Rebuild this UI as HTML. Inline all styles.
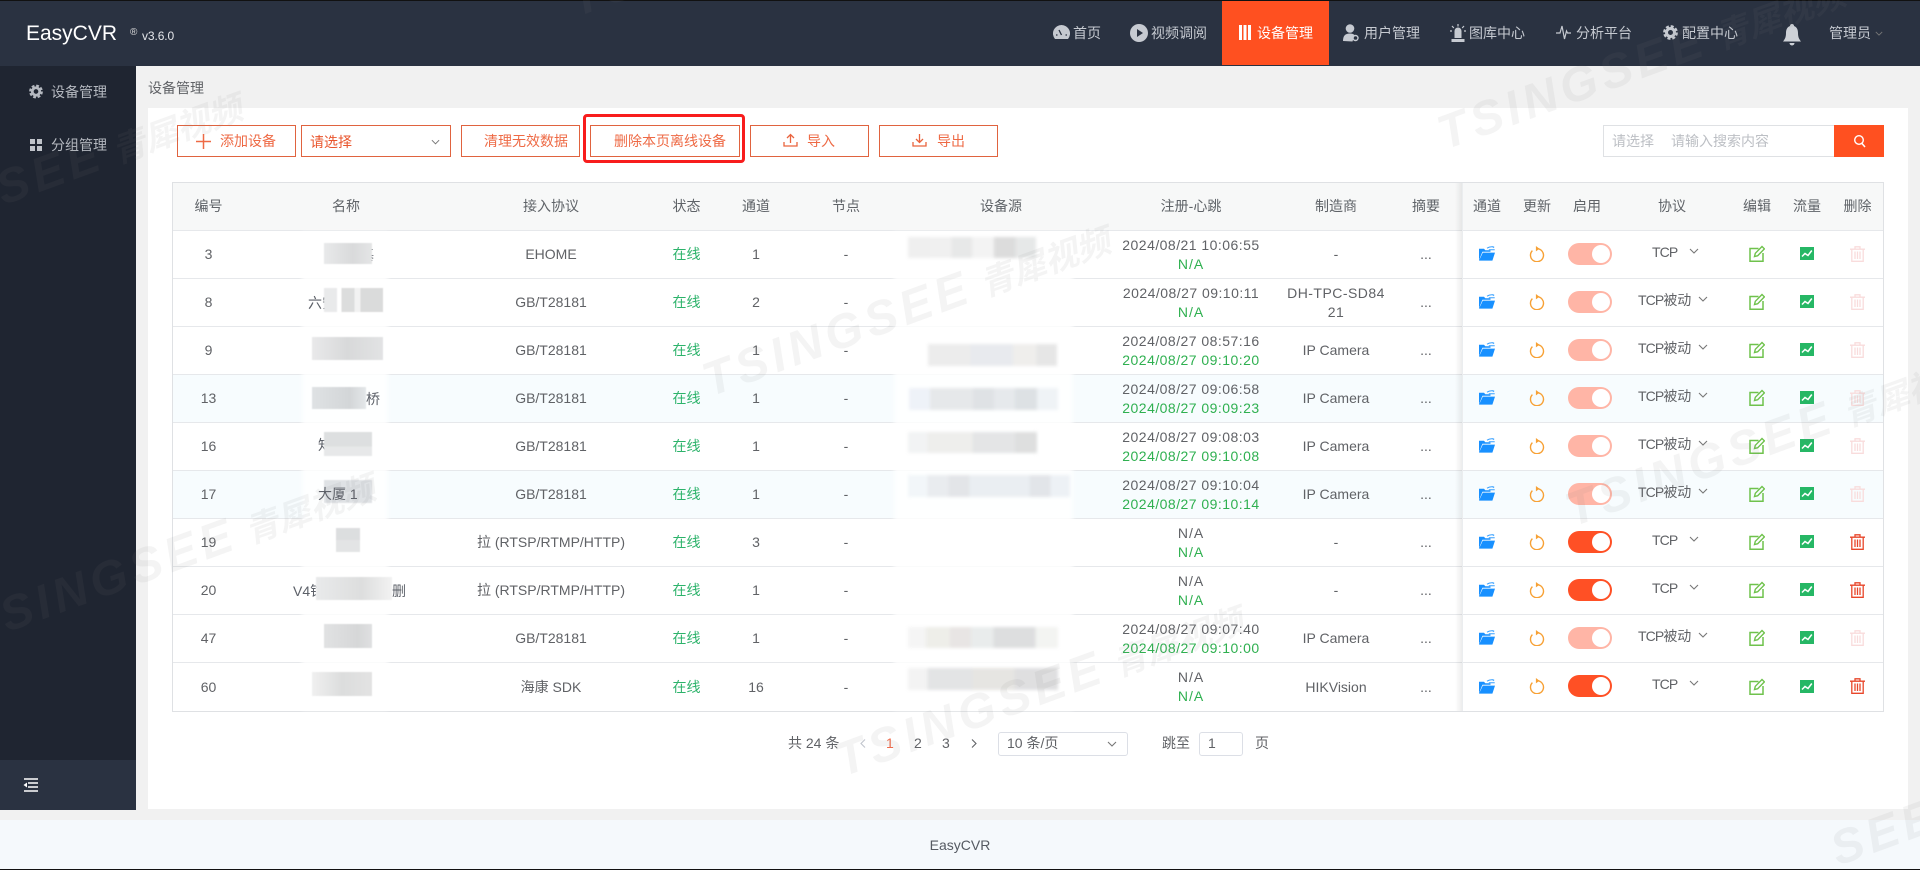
<!DOCTYPE html>
<html lang="zh">
<head>
<meta charset="utf-8">
<title>EasyCVR</title>
<style>
*{box-sizing:border-box;margin:0;padding:0}
html,body{width:1920px;height:870px;overflow:hidden;background:#f1f1f1}
body{position:relative;font:14px/20px "Liberation Sans","Noto Sans CJK SC",sans-serif;color:#606266}
.a{position:absolute;white-space:nowrap}
#top{left:0;top:0;width:1920px;height:1px;background:#111}
#hd{left:0;top:1px;width:1920px;height:65px;background:#2a3241}
#side{left:0;top:66px;width:136px;height:694px;background:#1f2531}
#col{left:0;top:760px;width:136px;height:50px;background:#2a3241}
#card{left:148px;top:108px;width:1760px;height:701px;background:#fff}
#ft{left:0;top:820px;width:1920px;height:49px;background:#f5f9fc;text-align:center;line-height:50px;color:#555a62}
#bot{left:0;top:869px;width:1920px;height:1px;background:#111}
.nav{top:23px;color:#c6cad1;line-height:20px}
.ni{top:24px}
.side{color:#b5b9c0;left:51px}
.btn{top:125px;height:32px;border:1px solid #e0633f;background:#fff}
.or{color:#ee6a45;line-height:20px;top:131px}
#tb{left:172px;top:182px;width:1712px;height:530px;border:1px solid #dfe1e4;background:#fff}
.r{display:grid;grid-template-columns:71px 204px 206px 65px 74px 106px 204px 176px 114px 66px 3px 50px 50px 50px 120px 50px 50px 51px;height:48px;border-bottom:1px solid #e6e8eb;align-items:center;text-align:center;line-height:19px}
.r:last-child{border-bottom:0}
.r>span{display:block;position:relative}
.h{background:#f7f8f8;color:#5f6368}
.hv{background:#f7fcfe}
.on{color:#2db36b}
.d{letter-spacing:.47px}
.g2{color:#2fb050}
.na{letter-spacing:1px}
svg{display:block}
.c svg{margin:0 auto;position:relative;top:-1px}
.sw{display:block;width:44px;height:22px;border-radius:11px;margin:0 auto;background:#ff5025;position:relative;top:-1px;left:3px}
.sw:after{content:"";position:absolute;left:24px;top:2px;width:18px;height:18px;border-radius:50%;background:#fff}
.off{background:#ffb5a6}
.p{height:20px}
.p b{position:absolute;font-weight:400;top:-2px;letter-spacing:-.9px}
.p b u{text-decoration:none;letter-spacing:0}
.p svg{position:absolute;top:0}
#shade{left:1455px;top:183px;width:7px;height:528px;background:linear-gradient(90deg,rgba(0,0,0,0),rgba(0,0,0,.07))}
#fixed{left:1462px;top:183px;width:1px;height:528px;background:#ebedef}
.haze{background:rgba(255,255,255,.8);filter:blur(2px)}
.bl{filter:blur(1.6px)}
.n{color:#5c6068;line-height:20px}
.gp{filter:blur(.6px);background:#d8dadb}
.pg{top:733px;line-height:20px;color:#606266}
.box{border:1px solid #dcdfe6;border-radius:3px;background:#fff}
#wm{left:0;top:0;width:1920px;height:870px;pointer-events:none}
</style>
</head>
<body>
<svg width="0" height="0" style="position:absolute">
<defs>
<symbol id="folder" viewBox="0 0 16 15"><path d="M0 14.500V2.800h5l1.300 1.500h5.200v1.400H3.400L.9 12" fill="#1890ff"/><path d="M3.800 6.600H16l-2.600 8H0z" fill="#1890ff"/><path d="M8 2.200C10 .9 12 .6 14.200.9M9.800 3.800H15.700" fill="none" stroke="#38a0ff" stroke-width="1"/><path d="M13.600 0l2 1-1.600 1.200z" fill="#38a0ff"/></symbol>
<symbol id="ref" viewBox="0 0 16 16"><path d="M8 2.700A6.500 6.500 0 1 1 3.400 4.600" fill="none" stroke="#f7a135" stroke-width="1.400"/><path d="M6.900 0L10.500 2.700 6.900 5.400z" fill="#f7a135"/></symbol>
<symbol id="edit" viewBox="0 0 16 17"><path d="M9.500 3.500H1v12.700h13V8" fill="none" stroke="#6fc24c" stroke-width="1.500"/><path d="M5.500 11.500L6.300 8.300 13 1.500l2.400 2.400-6.700 6.800z" fill="none" stroke="#6fc24c" stroke-width="1.400"/></symbol>
<symbol id="chart" viewBox="0 0 14 13"><rect width="14" height="13" fill="#26b765"/><path d="M2 9.500L5 6.500 8 8.500 11.800 3.500" fill="none" stroke="#fff" stroke-width="1.500"/></symbol>
<symbol id="del" viewBox="0 0 15 16"><path d="M0 3.200H15M5 3V.8H10V3" fill="none" stroke="#e8462a" stroke-width="1.300"/><path d="M1.800 3.500V15.300H13.200V3.500M5 5.500V13M7.500 5.500V13M10 5.500V13" fill="none" stroke="#e8462a" stroke-width="1.300"/></symbol>
<symbol id="delo" viewBox="0 0 15 16"><path d="M0 3.200H15M5 3V.8H10V3" fill="none" stroke="#f9dcdc" stroke-width="1.300"/><path d="M1.800 3.500V15.300H13.200V3.500M5 5.500V13M7.500 5.500V13M10 5.500V13" fill="none" stroke="#f9dcdc" stroke-width="1.300"/></symbol>
<symbol id="chev" viewBox="0 0 10 6"><path d="M1 1l4 4 4-4" fill="none" stroke="#777" stroke-width="1.100"/></symbol>
</defs>
</svg>

<div class="a" id="top"></div>
<div class="a" id="hd"></div>
<div class="a" id="side"></div>
<div class="a" id="col"></div>
<div class="a" id="card"></div>
<div class="a" id="ft">EasyCVR</div>
<div class="a" id="bot"></div>

<div class="a" style="left:26px;top:21px;font-size:21px;line-height:26px;color:#fff">EasyCVR</div>
<div class="a" style="left:130px;top:27px;font-size:10px;line-height:12px;color:#ddd">®</div>
<div class="a" style="left:142px;top:28px;font-size:12px;line-height:16px;letter-spacing:-.1px;color:#e4e6ea">v3.6.0</div>

<div class="a" style="left:1222px;top:1px;width:107px;height:64px;background:#ff5020"></div>

<svg class="a ni" style="left:1053px;top:25px" width="17" height="15" viewBox="0 0 17 15"><path d="M8.500 0A8.500 8.500 0 0 0 2 14h13A8.500 8.500 0 0 0 8.500 0z" fill="#c6cad1"/><path d="M8.500 10L6 5M3 10h1.500M12.500 10H14" stroke="#2a3241" stroke-width="1.300"/></svg>
<div class="a nav" style="left:1073px">首页</div>
<svg class="a ni" style="left:1130px;top:24px" width="18" height="18" viewBox="0 0 18 18"><circle cx="9" cy="9" r="9" fill="#c6cad1"/><path d="M7 5l6 4-6 4z" fill="#2a3241"/></svg>
<div class="a nav" style="left:1151px">视频调阅</div>
<svg class="a ni" style="left:1239px;top:25px" width="12" height="15" viewBox="0 0 12 15"><path d="M0 0h3v15H0zM4.500 0h3v15h-3zM9 0h3v15H9z" fill="#fff"/></svg>
<div class="a nav" style="left:1257px;color:#fff">设备管理</div>
<svg class="a ni" style="left:1343px;top:24px" width="16" height="18" viewBox="0 0 16 18"><circle cx="7" cy="4.500" r="4.300" fill="#c6cad1"/><path d="M0 17c0-5 2-7.500 7-7.500 2 0 3.500.5 4.500 1.500l-2 6.500z" fill="#c6cad1"/><circle cx="12.500" cy="14" r="2.500" fill="none" stroke="#c6cad1" stroke-width="1.400"/></svg>
<div class="a nav" style="left:1364px">用户管理</div>
<svg class="a ni" style="left:1450px;top:24px" width="16" height="18" viewBox="0 0 16 18"><path d="M4.500 7a3.500 3.500 0 0 1 7 0v7h-7zM1.500 15h13v3h-13z" fill="#c6cad1"/><path d="M8 0v2.500M2 2l1.800 2M14 2l-1.800 2M0 7h2M14 7h2" stroke="#c6cad1" stroke-width="1.200"/></svg>
<div class="a nav" style="left:1469px">图库中心</div>
<svg class="a ni" style="left:1556px;top:25px" width="15" height="15" viewBox="0 0 15 15"><path d="M0 8h4l2-7 2.500 13L10.500 6 11.500 8H15" fill="none" stroke="#c6cad1" stroke-width="1.200"/></svg>
<div class="a nav" style="left:1576px">分析平台</div>
<svg class="a ni" style="left:1663px;top:25px" width="15" height="15" viewBox="0 0 15 15"><circle cx="7.500" cy="7.500" r="4" fill="none" stroke="#c6cad1" stroke-width="3"/><circle cx="7.500" cy="7.500" r="6.200" fill="none" stroke="#c6cad1" stroke-width="2.400" stroke-dasharray="3 1.870"/></svg>
<div class="a nav" style="left:1682px">配置中心</div>
<svg class="a" style="left:1782px;top:24px" width="20" height="22" viewBox="0 0 20 22"><path d="M10 0c1.200 0 2 .8 2 2 3 1 4 4 4 7 0 4 1 6 3 8.500H1C3 15 4 13 4 9c0-3 1-6 4-7 0-1.200.8-2 2-2z" fill="#cdd1d7"/><path d="M7.500 19a2.500 2.500 0 0 0 5 0z" fill="#cdd1d7"/></svg>
<div class="a nav" style="left:1829px">管理员</div>
<svg class="a" style="left:1875px;top:31px" width="8" height="5"><use href="#chev"/></svg>

<svg class="a" style="left:29px;top:84px" width="14" height="15" viewBox="0 0 15 15"><circle cx="7.500" cy="7.500" r="4" fill="none" stroke="#b5b9c0" stroke-width="3"/><circle cx="7.500" cy="7.500" r="6.200" fill="none" stroke="#b5b9c0" stroke-width="2.400" stroke-dasharray="3 1.870"/></svg>
<div class="a side" style="top:82px">设备管理</div>
<svg class="a" style="left:30px;top:139px" width="12" height="12" viewBox="0 0 12 12"><path d="M0 0h5v5H0zM7 0h5v5H7zM0 7h5v5H0zM7 7h5v5H7z" fill="#c0c4ca"/></svg>
<div class="a side" style="top:135px">分组管理</div>
<svg class="a" style="left:23px;top:778px" width="15" height="14" viewBox="0 0 15 14"><path d="M1 1h14M5 5h10M5 9h10M1 13h14" stroke="#fff" stroke-width="1.600"/><path d="M.5 7L4 4.500v5z" fill="#fff"/></svg>

<div class="a" style="left:148px;top:78px;color:#606266">设备管理</div>

<div class="a btn" style="left:177px;width:119px"></div>
<svg class="a" style="left:196px;top:134px" width="15" height="15" viewBox="0 0 15 15"><path d="M7.500 0v15M0 7.500h15" stroke="#ee6a45" stroke-width="1.500"/></svg>
<div class="a or" style="left:220px">添加设备</div>
<div class="a btn" style="left:301px;width:150px"></div>
<div class="a or" style="left:310px;top:132px;color:#e9552d">请选择</div>
<svg class="a" style="left:431px;top:139px" width="9" height="6"><use href="#chev"/></svg>
<div class="a btn" style="left:461px;width:119px"></div>
<div class="a or" style="left:484px">清理无效数据</div>
<div class="a" style="left:583px;top:114px;width:162px;height:49px;border:3.500px solid #f81d1d;border-radius:4px"></div>
<div class="a btn" style="left:590px;width:150px"></div>
<div class="a or" style="left:614px">删除本页离线设备</div>
<div class="a btn" style="left:750px;width:119px"></div>
<svg class="a" style="left:783px;top:133px" width="15" height="14" viewBox="0 0 15 14"><path d="M1 9v4h13V9M7.500 10V1.500M4 5l3.500-3.500L11 5" fill="none" stroke="#e9633d" stroke-width="1.300"/></svg>
<div class="a or" style="left:807px">导入</div>
<div class="a btn" style="left:879px;width:119px"></div>
<svg class="a" style="left:912px;top:133px" width="15" height="14" viewBox="0 0 15 14"><path d="M1 9v4h13V9M7.500 1v8.500M4 6l3.500 3.500L11 6" fill="none" stroke="#e9633d" stroke-width="1.300"/></svg>
<div class="a or" style="left:937px">导出</div>

<div class="a" style="left:1603px;top:125px;width:232px;height:32px;border:1px solid #dfe1e4;border-right:0;background:#fff"></div>
<div class="a" style="left:1612px;top:131px;color:#bcbfc4">请选择</div>
<div class="a" style="left:1671px;top:131px;color:#bcbfc4">请输入搜索内容</div>
<div class="a" style="left:1834px;top:125px;width:50px;height:32px;background:#ff5020"></div>
<svg class="a" style="left:1853px;top:134px" width="13" height="14" viewBox="0 0 13 14"><circle cx="6" cy="6" r="4.300" fill="none" stroke="#fff" stroke-width="1.400"/><path d="M9 9.500l3 3.500" stroke="#fff" stroke-width="1.500"/></svg>

<div class="a" id="tb">
<div class="r h"><span>编号</span><span>名称</span><span>接入协议</span><span>状态</span><span>通道</span><span>节点</span><span>设备源</span><span>注册-心跳</span><span>制造商</span><span>摘要</span><span></span><span>通道</span><span>更新</span><span>启用</span><span>协议</span><span>编辑</span><span>流量</span><span>删除</span></div>

<div class="r"><span>3</span><span></span><span>EHOME</span><span class="on">在线</span><span>1</span><span>-</span><span></span><span><span class="d">2024/08/21 10:06:55</span><br><span class="g2 na">N/A</span></span><span>-</span><span>...</span><span></span><span class="c"><svg width="16" height="15"><use href="#folder"/></svg></span><span class="c"><svg width="16" height="16"><use href="#ref"/></svg></span><span><i class="sw off"></i></span><span class="p"><b style="left:40px">TCP</b><svg style="left:77px;top:3px" width="10" height="6"><use href="#chev"/></svg></span><span class="c"><svg width="16" height="17"><use href="#edit"/></svg></span><span class="c"><svg width="14" height="13"><use href="#chart"/></svg></span><span class="c"><svg width="15" height="16"><use href="#delo"/></svg></span></div>

<div class="r"><span>8</span><span></span><span>GB/T28181</span><span class="on">在线</span><span>2</span><span>-</span><span></span><span><span class="d">2024/08/27 09:10:11</span><br><span class="g2 na">N/A</span></span><span class="d">DH-TPC-SD84<br>21</span><span>...</span><span></span><span class="c"><svg width="16" height="15"><use href="#folder"/></svg></span><span class="c"><svg width="16" height="16"><use href="#ref"/></svg></span><span><i class="sw off"></i></span><span class="p"><b style="left:26px">TCP<u>被动</u></b><svg style="left:86px;top:3px" width="10" height="6"><use href="#chev"/></svg></span><span class="c"><svg width="16" height="17"><use href="#edit"/></svg></span><span class="c"><svg width="14" height="13"><use href="#chart"/></svg></span><span class="c"><svg width="15" height="16"><use href="#delo"/></svg></span></div>

<div class="r"><span>9</span><span></span><span>GB/T28181</span><span class="on">在线</span><span>1</span><span>-</span><span></span><span><span class="d">2024/08/27 08:57:16</span><br><span class="g2 d">2024/08/27 09:10:20</span></span><span>IP Camera</span><span>...</span><span></span><span class="c"><svg width="16" height="15"><use href="#folder"/></svg></span><span class="c"><svg width="16" height="16"><use href="#ref"/></svg></span><span><i class="sw off"></i></span><span class="p"><b style="left:26px">TCP<u>被动</u></b><svg style="left:86px;top:3px" width="10" height="6"><use href="#chev"/></svg></span><span class="c"><svg width="16" height="17"><use href="#edit"/></svg></span><span class="c"><svg width="14" height="13"><use href="#chart"/></svg></span><span class="c"><svg width="15" height="16"><use href="#delo"/></svg></span></div>

<div class="r hv"><span>13</span><span></span><span>GB/T28181</span><span class="on">在线</span><span>1</span><span>-</span><span></span><span><span class="d">2024/08/27 09:06:58</span><br><span class="g2 d">2024/08/27 09:09:23</span></span><span>IP Camera</span><span>...</span><span></span><span class="c"><svg width="16" height="15"><use href="#folder"/></svg></span><span class="c"><svg width="16" height="16"><use href="#ref"/></svg></span><span><i class="sw off"></i></span><span class="p"><b style="left:26px">TCP<u>被动</u></b><svg style="left:86px;top:3px" width="10" height="6"><use href="#chev"/></svg></span><span class="c"><svg width="16" height="17"><use href="#edit"/></svg></span><span class="c"><svg width="14" height="13"><use href="#chart"/></svg></span><span class="c"><svg width="15" height="16"><use href="#delo"/></svg></span></div>

<div class="r"><span>16</span><span></span><span>GB/T28181</span><span class="on">在线</span><span>1</span><span>-</span><span></span><span><span class="d">2024/08/27 09:08:03</span><br><span class="g2 d">2024/08/27 09:10:08</span></span><span>IP Camera</span><span>...</span><span></span><span class="c"><svg width="16" height="15"><use href="#folder"/></svg></span><span class="c"><svg width="16" height="16"><use href="#ref"/></svg></span><span><i class="sw off"></i></span><span class="p"><b style="left:26px">TCP<u>被动</u></b><svg style="left:86px;top:3px" width="10" height="6"><use href="#chev"/></svg></span><span class="c"><svg width="16" height="17"><use href="#edit"/></svg></span><span class="c"><svg width="14" height="13"><use href="#chart"/></svg></span><span class="c"><svg width="15" height="16"><use href="#delo"/></svg></span></div>

<div class="r hv"><span>17</span><span></span><span>GB/T28181</span><span class="on">在线</span><span>1</span><span>-</span><span></span><span><span class="d">2024/08/27 09:10:04</span><br><span class="g2 d">2024/08/27 09:10:14</span></span><span>IP Camera</span><span>...</span><span></span><span class="c"><svg width="16" height="15"><use href="#folder"/></svg></span><span class="c"><svg width="16" height="16"><use href="#ref"/></svg></span><span><i class="sw off"></i></span><span class="p"><b style="left:26px">TCP<u>被动</u></b><svg style="left:86px;top:3px" width="10" height="6"><use href="#chev"/></svg></span><span class="c"><svg width="16" height="17"><use href="#edit"/></svg></span><span class="c"><svg width="14" height="13"><use href="#chart"/></svg></span><span class="c"><svg width="15" height="16"><use href="#delo"/></svg></span></div>

<div class="r"><span>19</span><span></span><span>拉 (RTSP/RTMP/HTTP)</span><span class="on">在线</span><span>3</span><span>-</span><span></span><span><span class="na">N/A</span><br><span class="g2 na">N/A</span></span><span>-</span><span>...</span><span></span><span class="c"><svg width="16" height="15"><use href="#folder"/></svg></span><span class="c"><svg width="16" height="16"><use href="#ref"/></svg></span><span><i class="sw"></i></span><span class="p"><b style="left:40px">TCP</b><svg style="left:77px;top:3px" width="10" height="6"><use href="#chev"/></svg></span><span class="c"><svg width="16" height="17"><use href="#edit"/></svg></span><span class="c"><svg width="14" height="13"><use href="#chart"/></svg></span><span class="c"><svg width="15" height="16"><use href="#del"/></svg></span></div>

<div class="r"><span>20</span><span></span><span>拉 (RTSP/RTMP/HTTP)</span><span class="on">在线</span><span>1</span><span>-</span><span></span><span><span class="na">N/A</span><br><span class="g2 na">N/A</span></span><span>-</span><span>...</span><span></span><span class="c"><svg width="16" height="15"><use href="#folder"/></svg></span><span class="c"><svg width="16" height="16"><use href="#ref"/></svg></span><span><i class="sw"></i></span><span class="p"><b style="left:40px">TCP</b><svg style="left:77px;top:3px" width="10" height="6"><use href="#chev"/></svg></span><span class="c"><svg width="16" height="17"><use href="#edit"/></svg></span><span class="c"><svg width="14" height="13"><use href="#chart"/></svg></span><span class="c"><svg width="15" height="16"><use href="#del"/></svg></span></div>

<div class="r"><span>47</span><span></span><span>GB/T28181</span><span class="on">在线</span><span>1</span><span>-</span><span></span><span><span class="d">2024/08/27 09:07:40</span><br><span class="g2 d">2024/08/27 09:10:00</span></span><span>IP Camera</span><span>...</span><span></span><span class="c"><svg width="16" height="15"><use href="#folder"/></svg></span><span class="c"><svg width="16" height="16"><use href="#ref"/></svg></span><span><i class="sw off"></i></span><span class="p"><b style="left:26px">TCP<u>被动</u></b><svg style="left:86px;top:3px" width="10" height="6"><use href="#chev"/></svg></span><span class="c"><svg width="16" height="17"><use href="#edit"/></svg></span><span class="c"><svg width="14" height="13"><use href="#chart"/></svg></span><span class="c"><svg width="15" height="16"><use href="#delo"/></svg></span></div>

<div class="r"><span>60</span><span></span><span>海康 SDK</span><span class="on">在线</span><span>16</span><span>-</span><span></span><span><span class="na">N/A</span><br><span class="g2 na">N/A</span></span><span>HIKVision</span><span>...</span><span></span><span class="c"><svg width="16" height="15"><use href="#folder"/></svg></span><span class="c"><svg width="16" height="16"><use href="#ref"/></svg></span><span><i class="sw"></i></span><span class="p"><b style="left:40px">TCP</b><svg style="left:77px;top:3px" width="10" height="6"><use href="#chev"/></svg></span><span class="c"><svg width="16" height="17"><use href="#edit"/></svg></span><span class="c"><svg width="14" height="13"><use href="#chart"/></svg></span><span class="c"><svg width="15" height="16"><use href="#del"/></svg></span></div>
</div>

<div class="a" id="shade"></div>
<div class="a" id="fixed"></div>

<!-- redaction haze -->
<div class="a haze" style="left:894px;top:232px;width:179px;height:478px"></div>
<div class="a haze" style="left:302px;top:232px;width:86px;height:478px"></div>

<!-- device-source blur patches -->
<div class="a bl" style="left:908px;top:237px;width:128px;height:21px;background:linear-gradient(90deg,#efefef 0 17%,#f0f0f0 17% 34%,#e7e8e8 34% 50%,#f3f3f3 50% 67%,#dcdcdc 67% 84%,#e6e8e8 84%)"></div>
<div class="a bl" style="left:928px;top:344px;width:129px;height:22px;background:linear-gradient(90deg,#ececec 0 33%,#e8eaee 33% 66%,#efeeec 66% 84%,#e6e6e6 84%)"></div>
<div class="a bl" style="left:909px;top:388px;width:149px;height:22px;background:linear-gradient(90deg,#eef2f8 0 14%,#e6e8ea 14% 43%,#dfe2e5 43% 57%,#e6e9ec 57% 71%,#dde1e4 71% 86%,#eff3f6 86%)"></div>
<div class="a bl" style="left:908px;top:432px;width:129px;height:21px;background:linear-gradient(90deg,#f2f3f4 0 15%,#eeeeec 15% 50%,#e4e5e6 50% 83%,#dedfdf 83%)"></div>
<div class="a bl" style="left:908px;top:475px;width:162px;height:22px;background:linear-gradient(90deg,#f2f6f9 0 12%,#e9ecef 12% 25%,#e3e5e8 25% 38%,#eaeef2 38% 75%,#e2e5e9 75% 88%,#edf1f5 88%)"></div>
<div class="a bl" style="left:908px;top:627px;width:150px;height:21px;background:linear-gradient(90deg,#f5f5f5 0 12%,#eeeee9 12% 28%,#e8e5e4 28% 42%,#e9ecec 42% 57%,#dddedf 57% 85%,#f3f4f2 85%)"></div>
<div class="a bl" style="left:908px;top:668px;width:150px;height:22px;background:linear-gradient(90deg,#f3f3f3 0 13%,#e3e4e5 13% 43%,#e6e5e2 43% 71%,#dfdfe0 71%)"></div>

<!-- name cell fragments -->
<div class="a n" style="left:360px;top:245px">基</div>
<div class="a gp" style="left:324px;top:243px;width:48px;height:21px;background:linear-gradient(90deg,#e8e9ea,#d9dadb 60%,#e4e5e6)"></div>
<div class="a n" style="left:308px;top:293px">六安</div>
<div class="a gp" style="left:324px;top:288px;width:59px;height:24px;background:linear-gradient(90deg,#e9eaeb 0 22%,#fff 22% 30%,#dcdddd 30% 52%,#f2f2f2 52% 62%,#dadbdb 62%)"></div>
<div class="a gp" style="left:312px;top:337px;width:71px;height:23px;background:linear-gradient(90deg,#e9e9ea,#d8d9da 50%,#e2e3e4)"></div>
<div class="a gp" style="left:312px;top:387px;width:54px;height:22px;background:linear-gradient(90deg,#dfe2e4,#d3d6d8 70%,#e4e7e9)"></div>
<div class="a n" style="left:366px;top:389px">桥</div>
<div class="a n" style="left:318px;top:435px">知</div>
<div class="a gp" style="left:324px;top:432px;width:48px;height:24px;background:linear-gradient(#dddfe0 60%,#e7e8e9 60%)"></div>
<div class="a gp" style="left:324px;top:480px;width:48px;height:23px;background:#dfe2e5"></div>
<div class="a n" style="left:318px;top:484px">大厦 1</div>
<div class="a gp" style="left:336px;top:528px;width:24px;height:24px;background:linear-gradient(#dcdedf 50%,#e3e4e5 50%)"></div>
<div class="a n" style="left:293px;top:581px">V4钳</div>
<div class="a gp" style="left:316px;top:577px;width:76px;height:23px;background:linear-gradient(90deg,#e9eaeb,#dddede 60%,#f2f2f2)"></div>
<div class="a n" style="left:392px;top:581px">删</div>
<div class="a gp" style="left:324px;top:624px;width:48px;height:24px;background:linear-gradient(90deg,#e1e2e3,#d6d7d8 70%,#dfe0e1)"></div>
<div class="a gp" style="left:312px;top:672px;width:60px;height:24px;background:linear-gradient(90deg,#f0f0f0,#dcdddd 50%,#e3e3e3)"></div>

<!-- pagination -->
<div class="a pg" style="left:788px">共 24 条</div>
<svg class="a" style="left:860px;top:739px" width="6" height="9" viewBox="0 0 6 9"><path d="M5 .5l-4 4 4 4" fill="none" stroke="#c0c4cc" stroke-width="1.100"/></svg>
<div class="a pg" style="left:886px;color:#ee6b4c">1</div>
<div class="a pg" style="left:914px">2</div>
<div class="a pg" style="left:942px">3</div>
<svg class="a" style="left:971px;top:739px" width="6" height="9" viewBox="0 0 6 9"><path d="M1 .5l4 4-4 4" fill="none" stroke="#606266" stroke-width="1.100"/></svg>
<div class="a box" style="left:998px;top:732px;width:130px;height:24px"></div>
<div class="a pg" style="left:1007px">10 条/页</div>
<svg class="a" style="left:1107px;top:741px" width="10" height="6"><use href="#chev"/></svg>
<div class="a pg" style="left:1162px">跳至</div>
<div class="a box" style="left:1199px;top:732px;width:44px;height:24px"></div>
<div class="a pg" style="left:1208px">1</div>
<div class="a pg" style="left:1255px">页</div>

<!-- watermarks -->
<svg class="a" id="wm" width="1920" height="870" viewBox="0 0 1920 870">
<g font-family="'Liberation Sans','Noto Sans CJK SC',sans-serif" font-weight="700" font-style="italic" font-size="48" letter-spacing="5" fill="rgba(130,130,130,.085)">
<text transform="translate(1445 150) rotate(-20)">TSINGSEE<tspan dx="10" font-size="34" letter-spacing="0">青犀视频</tspan></text>
<text transform="translate(710 397) rotate(-20)">TSINGSEE<tspan dx="10" font-size="34" letter-spacing="0">青犀视频</tspan></text>
<text transform="translate(-25 644) rotate(-20)">TSINGSEE<tspan dx="10" font-size="34" letter-spacing="0">青犀视频</tspan></text>
<text transform="translate(843 777) rotate(-20)">TSINGSEE<tspan dx="10" font-size="34" letter-spacing="0">青犀视频</tspan></text>
<text transform="translate(1573 527) rotate(-20)">TSINGSEE<tspan dx="10" font-size="34" letter-spacing="0">青犀视频</tspan></text>
<text transform="translate(1838 866) rotate(-20)">SEE</text>
<text transform="translate(-158 264) rotate(-20)">TSINGSEE<tspan dx="10" font-size="34" letter-spacing="0">青犀视频</tspan></text>
<text transform="translate(577 17) rotate(-20)">TSINGSEE<tspan dx="10" font-size="34" letter-spacing="0">青犀视频</tspan></text>
</g>
</svg>
</body>
</html>
